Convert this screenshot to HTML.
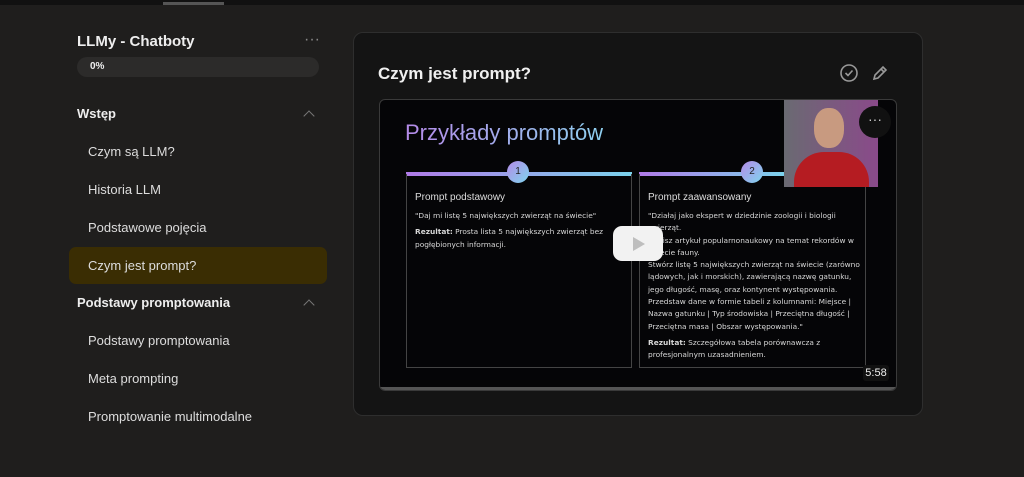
<!DOCTYPE html>
<html><head><meta charset="utf-8"><style>
*{margin:0;padding:0;box-sizing:border-box}
body{width:1024px;height:477px;background:#1f1e1d;font-family:"Liberation Sans",sans-serif;position:relative;overflow:hidden;color:#e8e8e8}
.top{position:absolute;left:0;top:0;width:1024px;height:5px;background:#111}
.top i{position:absolute;left:163px;top:2px;width:61px;height:3px;background:#555}
.a{position:absolute;white-space:nowrap}
.sb{font-weight:bold}
.item{position:absolute;left:88px;font-size:13px;color:#ddd}
.chev{position:absolute;left:305px;width:8px;height:8px;border-left:1.5px solid #777;border-top:1.5px solid #777;transform:rotate(45deg)}
.card{position:absolute;left:353px;top:32px;width:570px;height:384px;background:#141414;border:1px solid #2e2e2e;border-radius:10px}
.vid{position:absolute;left:379px;top:99px;width:518px;height:292px;background:#050507;border:1px solid #3a3a3a;border-radius:6px;overflow:hidden}
.box{position:absolute;top:74px;height:194px;border:1px solid #444;border-top:none}
.line{position:absolute;top:72px;height:4px;background:linear-gradient(90deg,#b07ae8,#7bd3ec)}
.num{position:absolute;top:61px;width:22px;height:22px;border-radius:50%;background:linear-gradient(135deg,#b48ae8,#7fd6ee);color:#222;font-size:10px;text-align:center;line-height:22px}
.t{font-family:"DejaVu Sans",sans-serif;font-size:7.4px;color:#d8d8d8;line-height:12.3px;position:absolute}
</style></head><body>
<div class="top"><i></i></div>
<div class="a sb" style="left:77px;top:33px;font-size:15px;color:#eee">LLMy - Chatboty</div>
<div class="a" style="left:304px;top:31px;font-size:16px;color:#888;letter-spacing:0px">···</div>
<div style="position:absolute;left:77px;top:57px;width:242px;height:20px;border-radius:10px;background:#2c2b2a"></div>
<div class="a sb" style="left:90px;top:61px;font-size:10px;color:#eee">0%</div>
<div class="a sb" style="left:77px;top:106px;font-size:13px;color:#eee">Wstęp</div>
<div class="chev" style="top:112px"></div>
<div class="item" style="top:144px">Czym są LLM?</div>
<div class="item" style="top:182px">Historia LLM</div>
<div class="item" style="top:220px">Podstawowe pojęcia</div>
<div style="position:absolute;left:69px;top:247px;width:258px;height:37px;border-radius:7px;background:#3a2d03"></div>
<div class="item" style="top:258px">Czym jest prompt?</div>
<div class="a sb" style="left:77px;top:295px;font-size:13px;color:#eee">Podstawy promptowania</div>
<div class="chev" style="top:301px"></div>
<div class="item" style="top:333px">Podstawy promptowania</div>
<div class="item" style="top:371px">Meta prompting</div>
<div class="item" style="top:409px">Promptowanie multimodalne</div>
<div class="card"></div>
<div class="a sb" style="left:378px;top:64px;font-size:17px;color:#f0f0f0">Czym jest prompt?</div>
<svg style="position:absolute;left:839px;top:63px" width="52" height="20" viewBox="0 0 52 20" fill="none" stroke="#999" stroke-width="1.6"><circle cx="10" cy="10" r="8"/><path d="M6.5 10l2.5 2.5 4.5-5"/><path d="M35 16l1-4 8-8 3 3-8 8z M42 6l3 3"/></svg>
<div class="vid">
<div class="a" style="left:25px;top:20px;font-size:22px;background:linear-gradient(90deg,#b58ae8,#8fd0f0);-webkit-background-clip:text;color:transparent">Przykłady promptów</div>
<div class="line" style="left:26px;width:226px"></div>
<div class="line" style="left:259px;width:146px"></div>
<div class="num" style="left:127px">1</div><div class="num" style="left:361px">2</div>
<div class="box" style="left:26px;width:226px"></div>
<div class="box" style="left:259px;width:227px"></div>
<div class="a" style="left:35px;top:92px;font-size:10px;color:#ddd">Prompt podstawowy</div>
<div class="a" style="left:268px;top:92px;font-size:10px;color:#ddd">Prompt zaawansowany</div>
<div class="t" style="left:35px;top:110px;width:200px">"Daj mi listę 5 największych zwierząt na świecie"<br><span style="display:block;margin-top:4px"><b>Rezultat:</b> Prosta lista 5 największych zwierząt bez pogłębionych informacji.</span></div>
<div class="t" style="left:268px;top:110px;width:215px">"Działaj jako ekspert w dziedzinie zoologii i biologii zwierząt.<br>Napisz artykuł popularnonaukowy na temat rekordów w świecie fauny.<br>Stwórz listę 5 największych zwierząt na świecie (zarówno lądowych, jak i morskich), zawierającą nazwę gatunku, jego długość, masę, oraz kontynent występowania.<br>Przedstaw dane w formie tabeli z kolumnami: Miejsce | Nazwa gatunku | Typ środowiska | Przeciętna długość | Przeciętna masa | Obszar występowania."<br><span style="display:block;margin-top:4px"><b>Rezultat:</b> Szczegółowa tabela porównawcza z profesjonalnym uzasadnieniem.</span></div>
<div style="position:absolute;left:404px;top:0;width:94px;height:87px;background:linear-gradient(90deg,#6a6a72,#8a4a8a)"><div style="position:absolute;left:30px;top:8px;width:30px;height:40px;border-radius:45%;background:#c89a80"></div><div style="position:absolute;left:10px;top:52px;width:75px;height:35px;border-radius:30px 30px 0 0;background:#b51c22"></div></div>
<div style="position:absolute;left:479px;top:6px;width:32px;height:32px;border-radius:50%;background:#111;color:#ccc;text-align:center;line-height:26px;font-size:14px">···</div>
<div style="position:absolute;left:233px;top:126px;width:50px;height:35px;border-radius:9px;background:#f2f2f2"><div style="position:absolute;left:20px;top:11px;border-left:12px solid #222;border-top:7px solid transparent;border-bottom:7px solid transparent;opacity:.25"></div></div>
<div style="position:absolute;left:483px;top:265px;width:26px;height:16px;border-radius:3px;background:#111;color:#eee;font-size:11px;text-align:center;line-height:16px">5:58</div>
<div style="position:absolute;left:0;top:287px;width:518px;height:3px;background:#555"></div>
</div>
</body></html>
